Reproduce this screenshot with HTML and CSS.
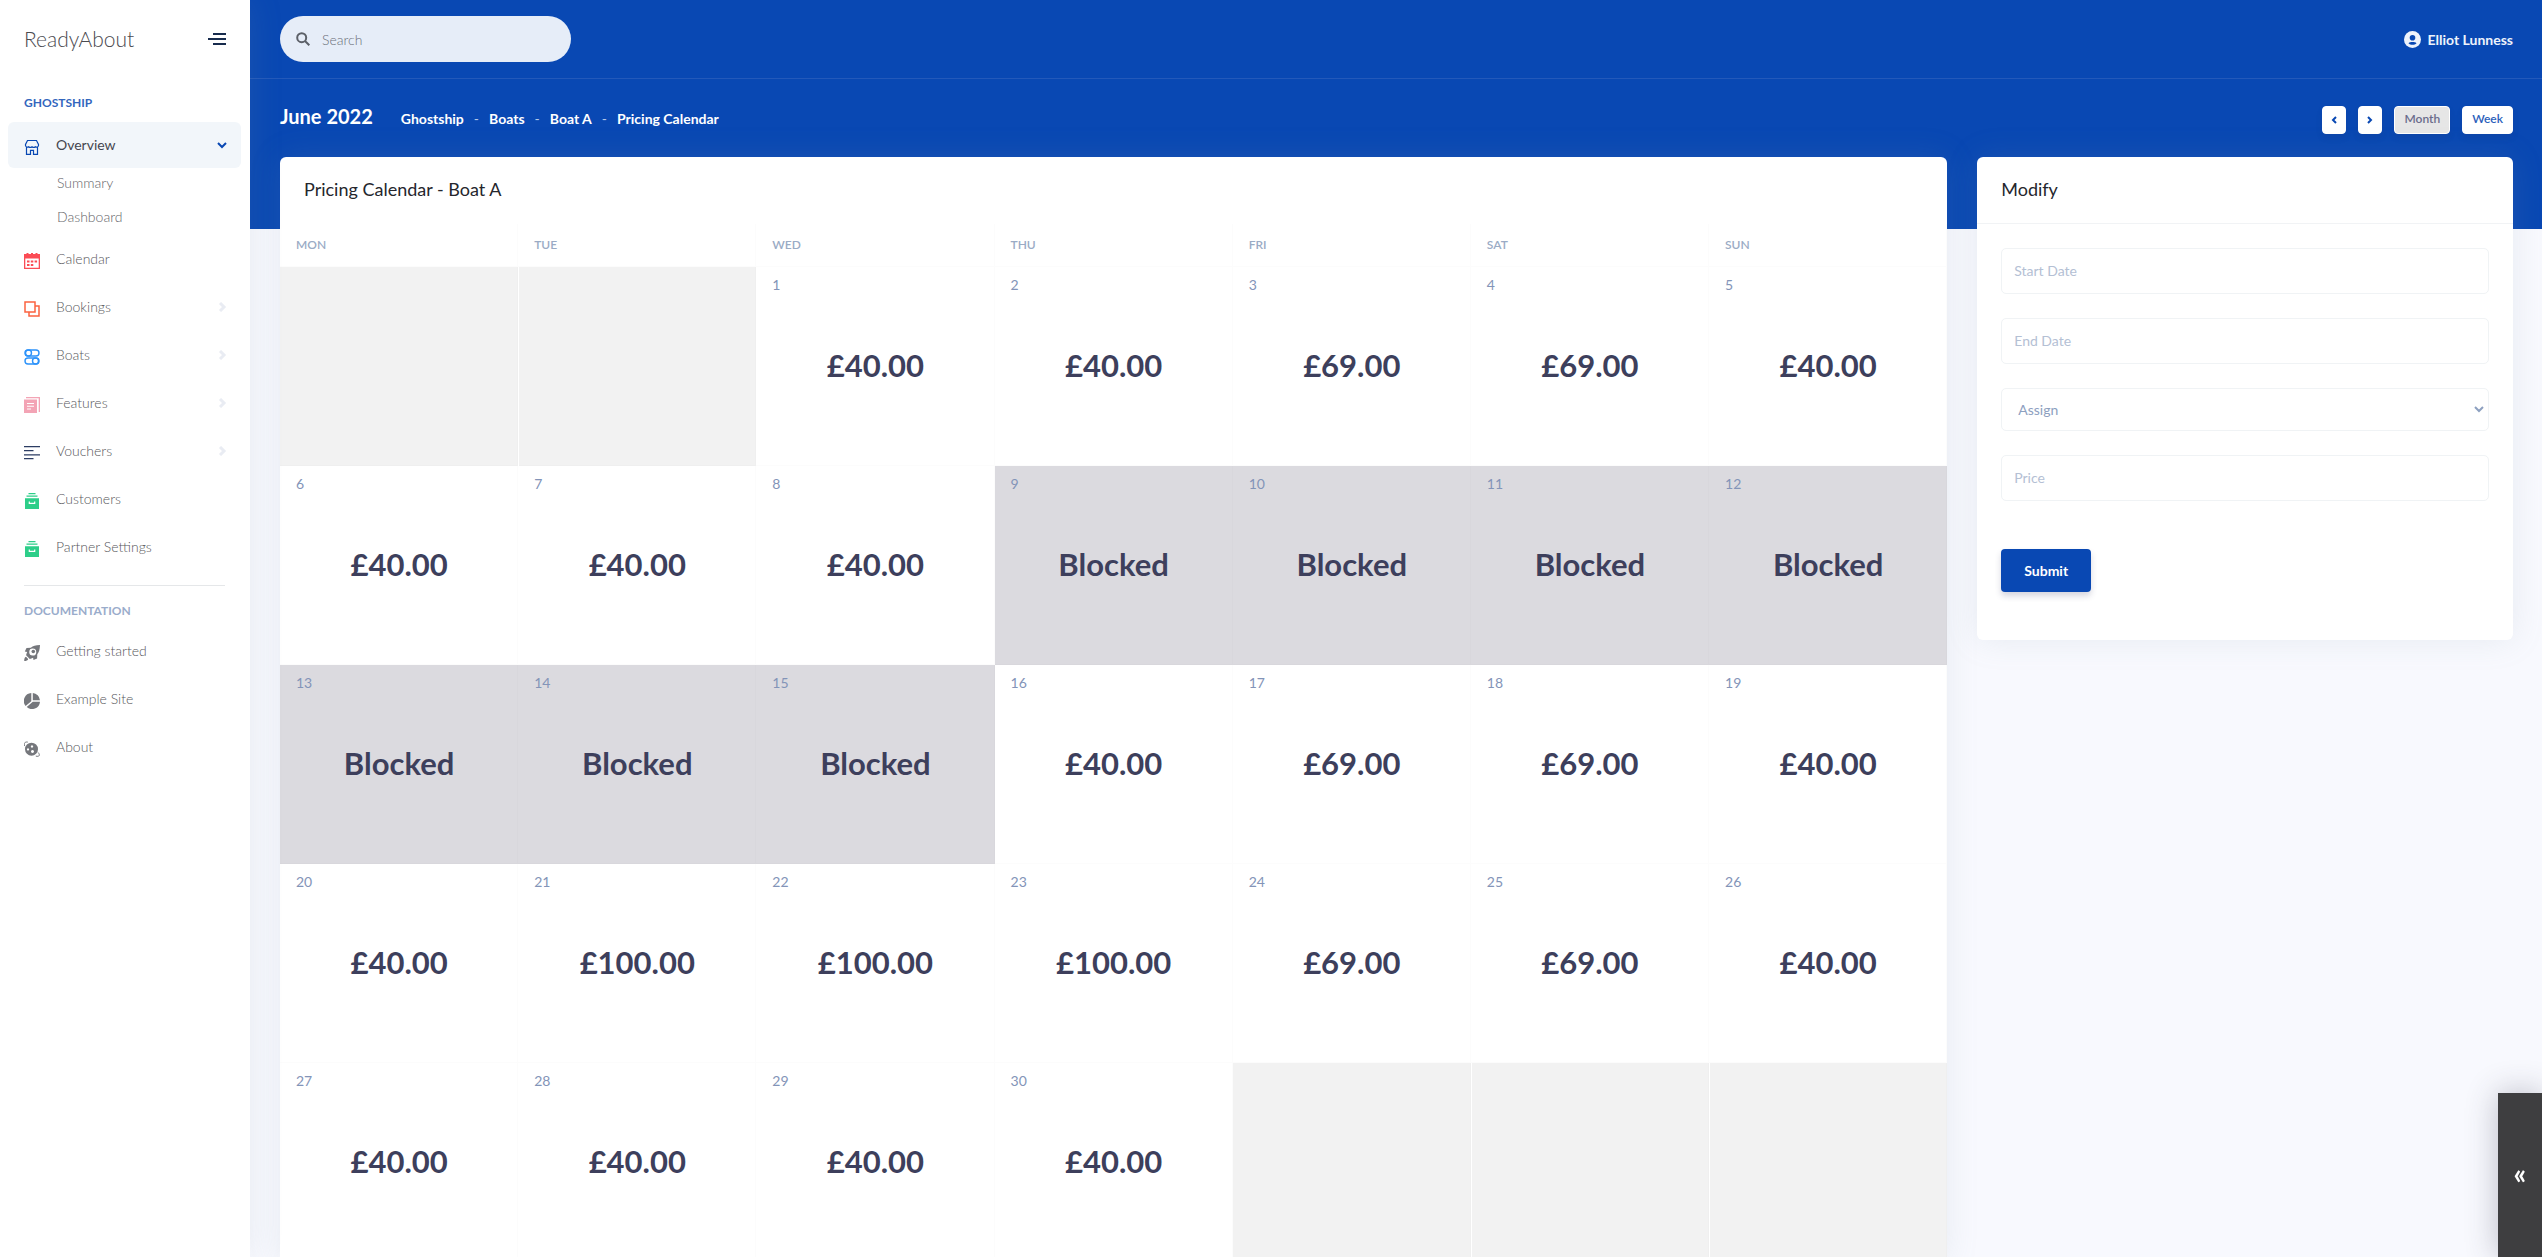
FILE: index.html
```
<!DOCTYPE html>
<html lang="en">
  <head>
    <meta charset="utf-8">
    <title>ReadyAbout - Pricing Calendar</title>
    <link rel="stylesheet" href="styles.css">
  </head>
  <body>
    <nav class="sidebar">
      <div class="sidebar-header">
        <a class="brand" href="#">ReadyAbout</a>
        <button class="toggler" aria-label="Toggle menu">
          <svg width="18" height="12" viewBox="0 0 18 12"><path d="M5 0h13v2H5zM0 5h18v2H0zM5 10h13v2H5z" fill="#172b4d"/></svg>
        </button>
      </div>

      <h6 class="nav-heading nav-heading-primary">GHOSTSHIP</h6>
      <a class="nav-link active" href="#">
        <svg class="nav-icon" viewBox="0 0 16 16" fill="none" stroke="#0948b3" stroke-width="1.2"><path d="M3.5 1.5h9l2 4v1a2 2 0 0 1-3.2 1.2 2.5 2.5 0 0 1-3.3 0 2.5 2.5 0 0 1-3.3 0A2 2 0 0 1 1.500 6.500v-1zM2.500 8v7.400h4v-4h3v4h4V8"/></svg>
        <span>Overview</span>
        <svg class="caret" viewBox="0 0 10 10"><path d="M1 3l4 4 4-4" fill="none" stroke="#0948b3" stroke-width="2"/></svg>
      </a>
      <ul class="submenu">
        <li><a href="#">Summary</a></li>
        <li><a href="#">Dashboard</a></li>
      </ul>
      <a class="nav-link" href="#">
        <svg class="nav-icon" viewBox="0 0 16 16"><path d="M0 1h2.500V0h2v1h2.500V0h2v1h2.500V0h2v1H16v15H0zM1.300 5.500v9.200h13.400V5.500z" fill="#fb4c55" fill-rule="evenodd"/><path d="M3 7.500h2.500v2H3zM6.800 7.500h2.500v2H6.800zM10.600 7.500h2.500v2h-2.500zM3 11h2.500v2H3zM6.800 11h2.500v2H6.800z" fill="#fb4c55"/></svg>
        <span>Calendar</span>
      </a>
      <a class="nav-link" href="#">
        <svg class="nav-icon" viewBox="0 0 16 16" fill="none" stroke="#fb6340" stroke-width="1.500"><path d="M1 1h10v10H1zM11 5h4v10H5v-4"/></svg>
        <span>Bookings</span>
        <svg class="caret" viewBox="0 0 10 10"><path d="M3 1l4 4-4 4" fill="none" stroke="#e9ecf3" stroke-width="3"/></svg>
      </a>
      <a class="nav-link" href="#">
        <svg class="nav-icon" viewBox="0 0 16 16" fill="none" stroke="#2d93fa" stroke-width="1.400"><rect x="1" y="1" width="14" height="6" rx="3"/><rect x="1" y="9" width="14" height="6" rx="3"/><circle cx="4.500" cy="4" r="3"/><circle cx="11.500" cy="12" r="3"/></svg>
        <span>Boats</span>
        <svg class="caret" viewBox="0 0 10 10"><path d="M3 1l4 4-4 4" fill="none" stroke="#e9ecf3" stroke-width="3"/></svg>
      </a>
      <a class="nav-link" href="#">
        <svg class="nav-icon" viewBox="0 0 16 16"><path d="M2 0h14v15h-1.300V1.300H2z" fill="#f3a4b5"/><path d="M0 2.500h13V16H0zM3 6v1h7V6zM3 8.700v1h7v-1zM3 11.500v1h4v-1z" fill="#f3a4b5" fill-rule="evenodd"/></svg>
        <span>Features</span>
        <svg class="caret" viewBox="0 0 10 10"><path d="M3 1l4 4-4 4" fill="none" stroke="#e9ecf3" stroke-width="3"/></svg>
      </a>
      <a class="nav-link" href="#">
        <svg class="nav-icon" viewBox="0 0 16 16" fill="#2c3d63"><path d="M0 1h16v1.300H0zM0 5h9.500v1.300H0zM0 9.200h16v1.300H0zM0 13h9.500v1.300H0z"/></svg>
        <span>Vouchers</span>
        <svg class="caret" viewBox="0 0 10 10"><path d="M3 1l4 4-4 4" fill="none" stroke="#e9ecf3" stroke-width="3"/></svg>
      </a>
      <a class="nav-link" href="#">
        <svg class="nav-icon" viewBox="0 0 16 16" fill="#2dce89"><path d="M4.500 0h7v1.200h-7zM2.500 2.500h11v1.300h-11zM1 5.200h14V16H1zM4.700 8.500v2.500h6.600V8.500h-1.200v1.300H5.900V8.500z" fill-rule="evenodd"/></svg>
        <span>Customers</span>
      </a>
      <a class="nav-link" href="#">
        <svg class="nav-icon" viewBox="0 0 16 16" fill="#2dce89"><path d="M4.500 0h7v1.200h-7zM2.500 2.500h11v1.300h-11zM1 5.200h14V16H1zM4.700 8.500v2.500h6.600V8.500h-1.200v1.300H5.900V8.500z" fill-rule="evenodd"/></svg>
        <span>Partner Settings</span>
      </a>

      <hr class="divider">

      <h6 class="nav-heading">DOCUMENTATION</h6>
      <a class="nav-link" href="#">
        <svg class="nav-icon" viewBox="0 0 16 16" fill="#75777c"><path d="M16 0c-4.500.2-7 .9-9.200 2.700L2.500 3 .8 6.500l2.400.4c-.6 1.400-.9 2.300-1.100 3.300l3.700 3.700c1-.2 2-.6 3.300-1.100L9.500 15l3.600-1.600.2-4.200C15.100 7 15.800 4.500 16 0zM8.800 3.600a3.500 3.500 0 1 1-.1 7 3.500 3.500 0 0 1 .1-7z" fill-rule="evenodd"/><circle cx="9.300" cy="6.500" r="1.800"/><path d="M.2 16c0-2.300.4-3.700 1.800-4.200l2.200 2.200C3.700 15.500 2.400 16 .2 16z"/></svg>
        <span>Getting started</span>
      </a>
      <a class="nav-link" href="#">
        <svg class="nav-icon" viewBox="0 0 16 16" fill="#75777c"><path d="M7.300 0v8.200L1.600 13A8 8 0 0 1 7.300 0zM8.800 0A8 8 0 0 1 16 7.200H8.800zM8.800 8.700H16A8 8 0 0 1 2.700 14z"/></svg>
        <span>Example Site</span>
      </a>
      <a class="nav-link" href="#">
        <svg class="nav-icon" viewBox="0 0 16 16" fill="#75777c"><path d="M7.500 1.700a6.500 6.500 0 1 1 0 13 6.500 6.500 0 0 1 0-13zM8 4.300a1.200 1.200 0 1 0 .01 0zM4 7.300a1.100 1.100 0 1 0 .01 0zM8.500 9a1.500 1.500 0 1 0 .01 0z" fill-rule="evenodd"/><path d="M.7 5C-.2 2.500.6.5 3.800 1.100M14.200 11.500c2 2.500 1.500 4.500-2.400 3.600" fill="none" stroke="#75777c"/></svg>
        <span>About</span>
      </a>
    </nav>

    <main class="main">
      <header class="header">
        <div class="topbar">
          <label class="search">
            <svg width="14" height="14" viewBox="0 0 14 14" fill="none" stroke="#5c6068" stroke-width="2"><circle cx="5.700" cy="5.700" r="4.500"/><path d="M9 9l4.300 4.300"/></svg>
            <input type="text" placeholder="Search" aria-label="Search">
          </label>
          <a class="user" href="#">
            <svg width="17" height="17" viewBox="0 0 17 17"><circle cx="8.500" cy="8.500" r="8.500" fill="#eef3fb"/><circle cx="8.500" cy="6.800" r="2.800" fill="#0948b3"/><path d="M4.500 12.300c1-1.300 2.300-1.300 4-1.300s3 0 4 1.300c-2 2-6 2-8 0z" fill="#0948b3"/></svg>
            <span>Elliot Lunness</span>
          </a>
        </div>
        <div class="page-title">
          <h1>June 2022</h1>
          <nav class="breadcrumb">
            <a href="#">Ghostship</a><span>-</span><a href="#">Boats</a><span>-</span><a href="#">Boat A</a><span>-</span><a href="#">Pricing Calendar</a>
          </nav>
          <div class="actions">
            <button class="btn btn-icon" aria-label="Previous"><svg width="8" height="8" viewBox="0 0 8 8"><path d="M6 1L3 4l3 3" fill="none" stroke="#0948b3" stroke-width="2"/></svg></button>
            <button class="btn btn-icon" aria-label="Next"><svg width="8" height="8" viewBox="0 0 8 8"><path d="M2 1l3 3-3 3" fill="none" stroke="#0948b3" stroke-width="2"/></svg></button>
            <button class="btn btn-selected">Month</button>
            <button class="btn">Week</button>
          </div>
        </div>
      </header>

      <div class="content">
        <section class="card card-calendar">
          <h2 class="card-header">Pricing Calendar - Boat A</h2>
          <table class="calendar">
            <thead>
              <tr><th>MON</th><th>TUE</th><th>WED</th><th>THU</th><th>FRI</th><th>SAT</th><th>SUN</th></tr>
            </thead>
            <tbody>
              <tr>
                <td class="empty"></td>
                <td class="empty"></td>
                <td><span class="day">1</span><div class="price">£40.00</div></td>
                <td><span class="day">2</span><div class="price">£40.00</div></td>
                <td><span class="day">3</span><div class="price">£69.00</div></td>
                <td><span class="day">4</span><div class="price">£69.00</div></td>
                <td><span class="day">5</span><div class="price">£40.00</div></td>
              </tr>
              <tr>
                <td><span class="day">6</span><div class="price">£40.00</div></td>
                <td><span class="day">7</span><div class="price">£40.00</div></td>
                <td><span class="day">8</span><div class="price">£40.00</div></td>
                <td class="blocked"><span class="day">9</span><div class="price">Blocked</div></td>
                <td class="blocked"><span class="day">10</span><div class="price">Blocked</div></td>
                <td class="blocked"><span class="day">11</span><div class="price">Blocked</div></td>
                <td class="blocked"><span class="day">12</span><div class="price">Blocked</div></td>
              </tr>
              <tr>
                <td class="blocked"><span class="day">13</span><div class="price">Blocked</div></td>
                <td class="blocked"><span class="day">14</span><div class="price">Blocked</div></td>
                <td class="blocked"><span class="day">15</span><div class="price">Blocked</div></td>
                <td><span class="day">16</span><div class="price">£40.00</div></td>
                <td><span class="day">17</span><div class="price">£69.00</div></td>
                <td><span class="day">18</span><div class="price">£69.00</div></td>
                <td><span class="day">19</span><div class="price">£40.00</div></td>
              </tr>
              <tr>
                <td><span class="day">20</span><div class="price">£40.00</div></td>
                <td><span class="day">21</span><div class="price">£100.00</div></td>
                <td><span class="day">22</span><div class="price">£100.00</div></td>
                <td><span class="day">23</span><div class="price">£100.00</div></td>
                <td><span class="day">24</span><div class="price">£69.00</div></td>
                <td><span class="day">25</span><div class="price">£69.00</div></td>
                <td><span class="day">26</span><div class="price">£40.00</div></td>
              </tr>
              <tr>
                <td><span class="day">27</span><div class="price">£40.00</div></td>
                <td><span class="day">28</span><div class="price">£40.00</div></td>
                <td><span class="day">29</span><div class="price">£40.00</div></td>
                <td><span class="day">30</span><div class="price">£40.00</div></td>
                <td class="empty"></td>
                <td class="empty"></td>
                <td class="empty"></td>
              </tr>
            </tbody>
          </table>
        </section>

        <section class="card card-modify">
          <h2 class="card-header card-header-line">Modify</h2>
          <form class="modify-form">
            <input class="form-control" type="text" placeholder="Start Date" aria-label="Start Date">
            <input class="form-control" type="text" placeholder="End Date" aria-label="End Date">
            <div class="select-wrap">
              <select class="form-control" aria-label="Assign">
                <option>Assign</option>
              </select>
              <svg class="select-caret" viewBox="0 0 10 10"><path d="M1 3l4 4 4-4" fill="none" stroke="#8da0c0" stroke-width="2"/></svg>
            </div>
            <input class="form-control" type="text" placeholder="Price" aria-label="Price">
            <button class="btn-submit" type="button">Submit</button>
          </form>
        </section>
      </div>
    </main>

    <button class="drawer-tab" aria-label="Open panel">«</button>
  </body>
</html>
```

FILE: styles.css
```
* {
  box-sizing: border-box;
}
body {
  margin: 0;
  height: 100vh;
  display: flex;
  overflow: hidden;
  background-color: #f8f9fe;
  font-family: Lato, "Open Sans", sans-serif;
  font-size: 14px;
  color: #525f7f;
}
a {
  color: inherit;
  text-decoration: none;
}
button,
input,
select {
  font-family: inherit;
}

/* sidebar */
.sidebar {
  position: relative;
  z-index: 2;
  flex: 0 0 250px;
  background-color: white;
  box-shadow: 0 0 32px 0 rgba(136, 152, 170, 0.15);
}
.sidebar-header {
  height: 78px;
  padding: 0 24px;
  display: flex;
  align-items: center;
  justify-content: space-between;
}
.brand {
  padding-bottom: 2px;
  font-size: 21px;
  font-weight: 300;
  color: #4a4a4f;
}
.toggler {
  display: flex;
  padding: 0;
  border: none;
  background: none;
}
.nav-heading {
  margin: 0;
  padding: 16px 24px 8px;
  font-size: 12px;
  line-height: 18px;
  font-weight: 700;
  color: #9aaccb;
}
.nav-heading-primary {
  padding-bottom: 10px;
  color: #3366bd;
}
.nav-link {
  display: flex;
  align-items: center;
  height: 46px;
  margin: 0 9px 2px 8px;
  padding: 0 14px 0 16px;
  border-radius: 6px;
  font-size: 14px;
  font-weight: 300;
  color: #58585c;
}
.nav-link.active {
  margin-bottom: 0;
  background-color: #f2f6fa;
  font-weight: 400;
  color: #45464f;
}
.nav-link span {
  flex: 1;
  padding-bottom: 2px;
}
.nav-icon {
  width: 16px;
  height: 16px;
  margin-right: 16px;
  position: relative;
  top: 2px;
}
.caret {
  width: 10px;
  height: 10px;
}
.submenu {
  margin: 0;
  margin-top: -2px;
  padding: 0 0 2px 57px;
  list-style: none;
  line-height: 34px;
  font-weight: 300;
  color: #65656a;
}
.divider {
  margin: 15px 25px 0 24px;
  border: none;
  border-top: 1px solid #e5e7e9;
}

/* header */
.main {
  flex: 1;
  min-width: 0;
  overflow-y: auto;
  scrollbar-width: none;
}
.header {
  height: 229px;
  background-color: #0948b3;
  color: white;
}
.topbar {
  display: flex;
  align-items: center;
  justify-content: space-between;
  height: 79px;
  padding: 0 29px 0 30px;
  border-bottom: 1px solid #2359ba;
}
.search {
  display: flex;
  align-items: center;
  gap: 12px;
  width: 291px;
  height: 46px;
  padding: 0 16px;
  border-radius: 23px;
  background-color: #e6edf8;
}
.search input {
  flex: 1;
  min-width: 0;
  padding: 0;
  border: none;
  outline: none;
  background: none;
  font-size: 14px;
}
.search input::placeholder {
  font-weight: 300;
  color: #6b707b;
}
.user {
  display: flex;
  align-items: center;
  gap: 7px;
  font-weight: 700;
  color: #eef3fb;
}
.page-title {
  display: flex;
  align-items: baseline;
  height: 78px;
  padding: 23px 29px 0 30px;
}
.page-title h1 {
  margin: 0 28px 0 0;
  font-size: 20px;
  line-height: 28px;
  font-weight: 700;
}
.breadcrumb {
  font-weight: 700;
}
.breadcrumb span {
  margin: 0 10px;
  font-weight: 400;
  color: #b5c8e8;
}
.actions {
  display: flex;
  gap: 12px;
  margin-left: auto;
}
.btn {
  height: 28px;
  padding: 0 9px 2px;
  border: 1px solid white;
  border-radius: 4px;
  background-color: white;
  font-size: 12px;
  font-weight: 600;
  color: #2c5fbb;
  box-shadow: 0 4px 6px rgba(50, 50, 93, 0.11);
}
.btn-icon {
  padding: 0 7px;
}
.btn-selected {
  background-color: #e6e6e6;
  color: #6a6c8b;
}

/* cards */
.content {
  display: grid;
  grid-template-columns: repeat(12, 1fr);
  align-items: start;
  gap: 30px;
  margin-top: -72px;
  padding: 0 29px 30px 30px;
}
.card {
  border-radius: 6px;
  background-color: white;
  box-shadow: 0 0 32px 0 rgba(136, 152, 170, 0.15);
}
.card-calendar {
  grid-column: span 9;
}
.card-modify {
  grid-column: span 3;
}
.card-header {
  height: 67px;
  margin: 0;
  padding: 0 24px;
  font-size: 18px;
  line-height: 64px;
  font-weight: 400;
  color: #25262d;
}
.card-header-line {
  border-bottom: 1px solid #f1f3f5;
}

/* calendar */
.calendar {
  width: 100%;
  table-layout: fixed;
  border-spacing: 0;
}
.calendar th,
.calendar td {
  box-shadow: inset -1px -1px rgba(0, 0, 0, 0.01);
}
.calendar th {
  height: 43px;
  padding: 0 16px 2px;
  font-size: 12px;
  font-weight: 600;
  text-align: left;
  color: #9aabc5;
}
.calendar td {
  height: 199px;
  padding: 8px 16px;
  vertical-align: top;
}
.calendar .empty {
  background-color: #f2f2f2;
}
.calendar .empty + .empty {
  border-left: 1px solid white;
}
.calendar .blocked {
  background-color: #dbdadf;
}
.day {
  display: block;
  font-size: 14px;
  line-height: 20px;
  color: #8394b8;
}
.price {
  margin-top: 50px;
  font-size: 31px;
  line-height: 40px;
  font-weight: 700;
  text-align: center;
  color: #3d3f5c;
}

/* modify form */
.modify-form {
  display: flex;
  flex-direction: column;
  align-items: stretch;
  gap: 24px;
  padding: 24px 24px 48px;
}
.form-control {
  width: 100%;
  height: 46px;
  padding: 0 12px 2px;
  border: 1px solid #f0f3f5;
  border-radius: 5px;
  background-color: white;
  font-size: 14px;
  color: #8da0c0;
}
.form-control::placeholder {
  color: #b4c0d4;
}
.select-wrap {
  position: relative;
}
select.form-control {
  display: block;
  height: 43px;
  padding: 0 16px;
  appearance: none;
}
.select-caret {
  position: absolute;
  right: 5px;
  top: 16px;
  width: 10px;
  height: 10px;
}
.btn-submit {
  align-self: flex-start;
  height: 43px;
  margin-top: 24px;
  padding: 0 23px;
  border: none;
  border-radius: 4px;
  background-color: #0948b3;
  font-size: 14px;
  font-weight: 700;
  color: white;
  box-shadow: 0 4px 6px rgba(50, 50, 93, 0.2);
}

.drawer-tab {
  position: fixed;
  right: 0;
  bottom: 0;
  z-index: 3;
  width: 44px;
  height: 164px;
  padding: 0 0 4px;
  border: none;
  background-color: #3e3e40;
  font-size: 28px;
  font-weight: 700;
  color: white;
  box-shadow: 0 0 32px 0 rgba(50, 50, 70, 0.3);
}
```
